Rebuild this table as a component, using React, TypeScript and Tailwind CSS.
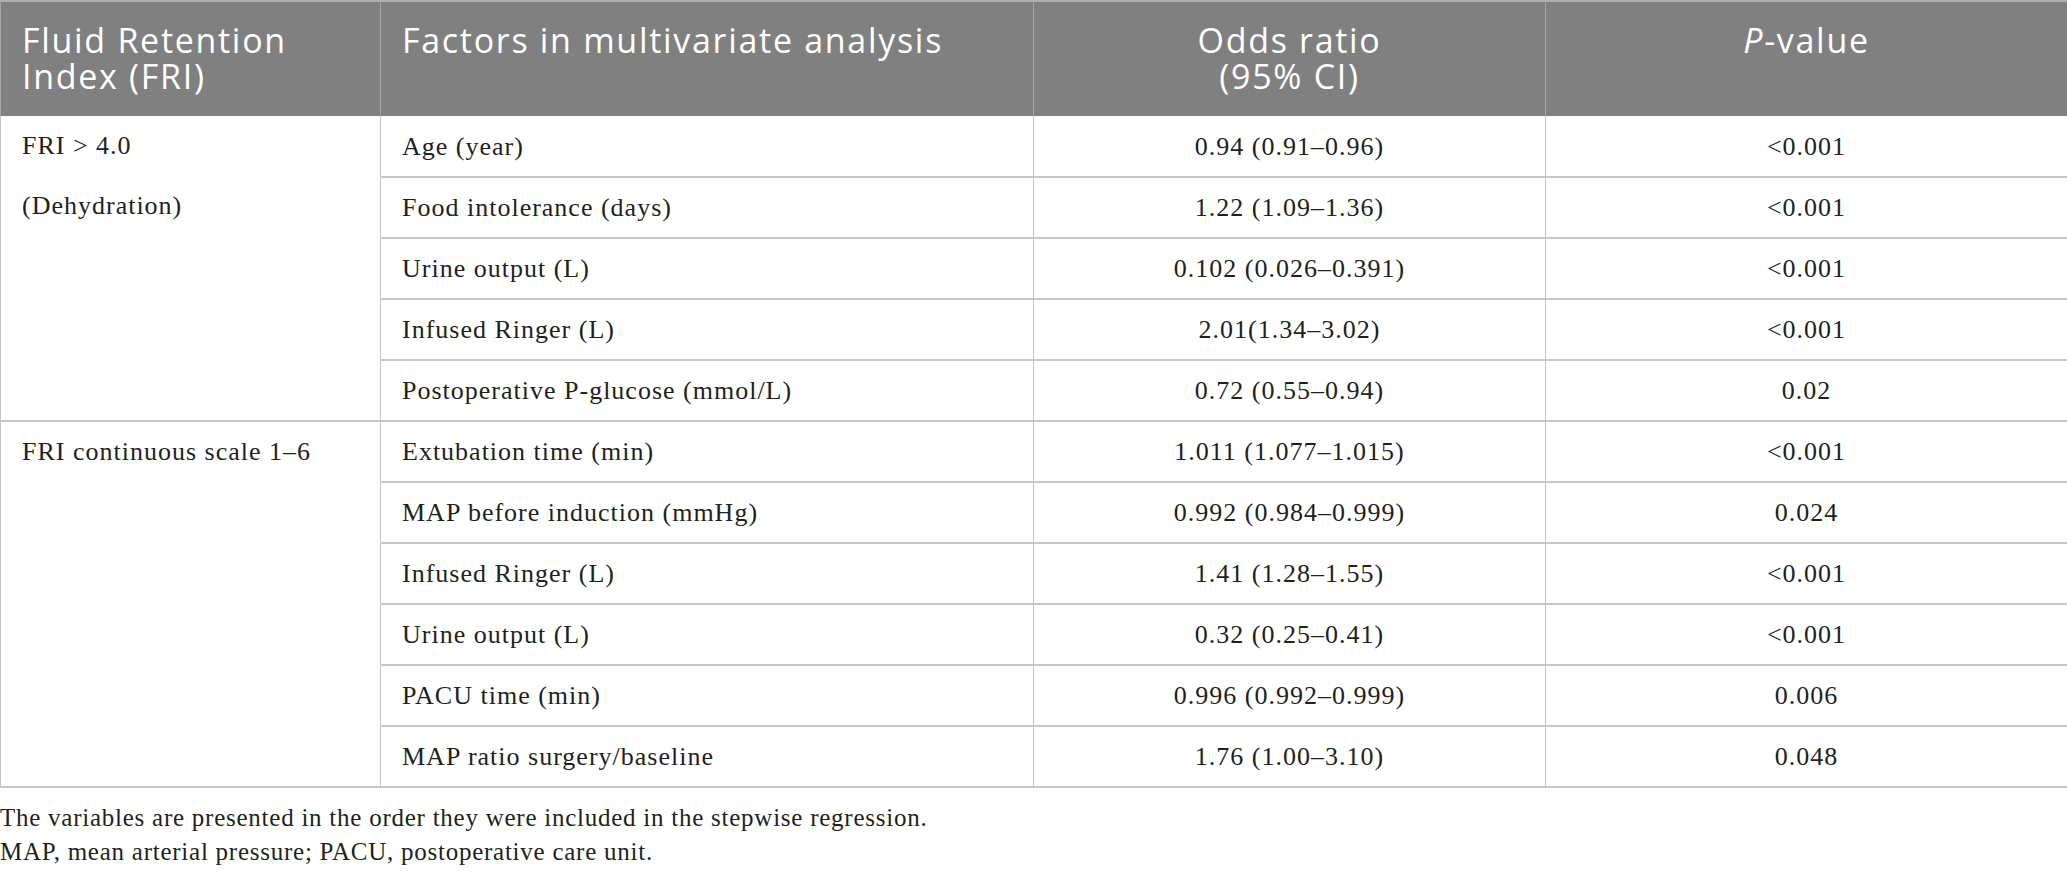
import React from "react";

type Row = { factor: string; or: string; p: string };

const group1: Row[] = [
  { factor: "Age (year)", or: "0.94 (0.91–0.96)", p: "<0.001" },
  { factor: "Food intolerance (days)", or: "1.22 (1.09–1.36)", p: "<0.001" },
  { factor: "Urine output (L)", or: "0.102 (0.026–0.391)", p: "<0.001" },
  { factor: "Infused Ringer (L)", or: "2.01(1.34–3.02)", p: "<0.001" },
  { factor: "Postoperative P-glucose (mmol/L)", or: "0.72 (0.55–0.94)", p: "0.02" },
];

const group2: Row[] = [
  { factor: "Extubation time (min)", or: "1.011 (1.077–1.015)", p: "<0.001" },
  { factor: "MAP before induction (mmHg)", or: "0.992 (0.984–0.999)", p: "0.024" },
  { factor: "Infused Ringer (L)", or: "1.41 (1.28–1.55)", p: "<0.001" },
  { factor: "Urine output (L)", or: "0.32 (0.25–0.41)", p: "<0.001" },
  { factor: "PACU time (min)", or: "0.996 (0.992–0.999)", p: "0.006" },
  { factor: "MAP ratio surgery/baseline", or: "1.76 (1.00–3.10)", p: "0.048" },
];

const td = "border-x border-[#c4c4c4] align-middle h-[61px] p-0";

function GroupRows({ label, rows }: { label: React.ReactNode; rows: Row[] }) {
  return (
    <>
      {rows.map((r, i) => (
        <tr key={i} className="border-b-2 border-[#c8c8c8]">
          {i === 0 && (
            <td
              rowSpan={rows.length}
              className="border-x border-[#c4c4c4] align-top pl-[21px] pt-0 leading-[60px]"
            >
              {label}
            </td>
          )}
          <td className={`${td} pl-[21px] text-left`}>{r.factor}</td>
          <td className={`${td} text-center`}>{r.or}</td>
          <td className={`${td} text-center`}>{r.p}</td>
        </tr>
      ))}
    </>
  );
}

export default function App() {
  return (
    <div className="w-[2067px] bg-white">
      <table className="w-[2067px] table-fixed border-collapse font-['Liberation_Serif',serif] text-[26px] tracking-[1px] text-[#231f20]">
        <colgroup>
          <col className="w-[380px]" />
          <col className="w-[653px]" />
          <col className="w-[512px]" />
          <col className="w-[522px]" />
        </colgroup>
        <thead>
          <tr className="bg-[#808080] text-white font-['Open_Sans',sans-serif] text-[34px] leading-[36px] tracking-[1.7px] h-[115px] border-t-2 border-[#b0b0b0]">
            <th className="border-x border-[#a6a6a6] align-top text-left font-normal pl-[21px] pt-[20px]">
              <div>Fluid Retention</div>
              <div>Index (FRI)</div>
            </th>
            <th className="border-x border-[#a6a6a6] align-top text-left font-normal pl-[21px] pt-[20px]">
              Factors in multivariate analysis
            </th>
            <th className="border-x border-[#a6a6a6] align-top text-center font-normal pt-[20px]">
              <div>Odds ratio</div>
              <div>(95% CI)</div>
            </th>
            <th className="border-x border-[#a6a6a6] align-top text-center font-normal pt-[20px]">
              <span className="italic">P</span>-value
            </th>
          </tr>
        </thead>
        <tbody>
          <GroupRows
            label={
              <>
                FRI &gt; 4.0
                <br />
                (Dehydration)
              </>
            }
            rows={group1}
          />
          <GroupRows label={<>FRI continuous scale 1–6</>} rows={group2} />
        </tbody>
      </table>
      <div className="font-['Liberation_Serif',serif] text-[25px] tracking-[0.75px] leading-[34px] mt-[13px] text-[#231f20]">
        <p>The variables are presented in the order they were included in the stepwise regression.</p>
        <p>MAP, mean arterial pressure; PACU, postoperative care unit.</p>
      </div>
    </div>
  );
}
